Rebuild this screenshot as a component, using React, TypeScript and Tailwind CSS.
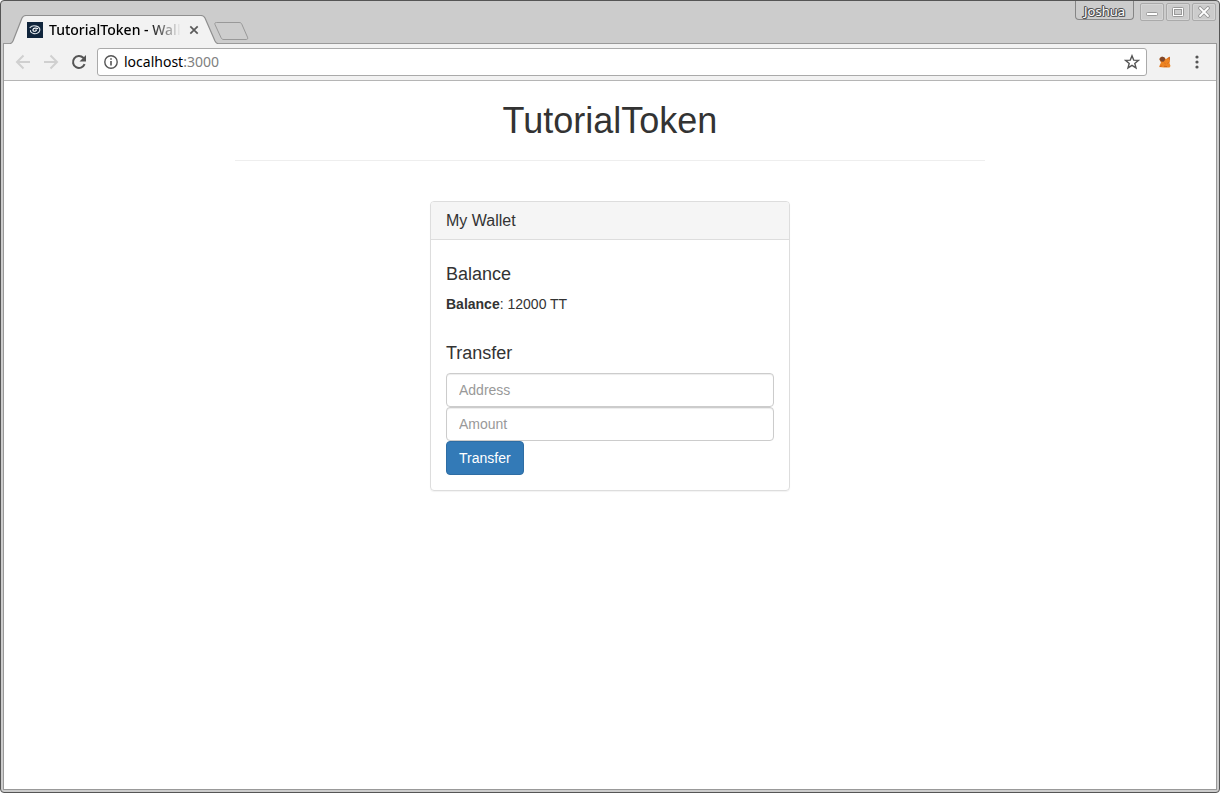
import React from "react";

function TabStrip() {
  return (
    <header className="flex h-[42px] items-start justify-between">
      <div className="flex pl-[7px] pt-[14px]">
        <div className="relative h-7 w-[208px] shrink-0">
          <svg className="absolute inset-0" width="208" height="29" viewBox="0 0 208 29" aria-hidden="true">
            <path d="M0 29 V28.500 C1.500 28.500 2 28 3 26 L12 3 C13 1 14 .5 16 .5 H191 C193 .5 194 1 195 3 L205 26 C206 28 206.500 28.500 208 28.500 V29Z" fill="#f2f2f2" />
            <path d="M0 28.500 C1.500 28.500 2 28 3 26 L12 3 C13 1 14 .5 16 .5 H191 C193 .5 194 1 195 3 L205 26 C206 28 206.500 28.500 208 28.500" fill="none" stroke="#8f8f8f" strokeWidth="1.200" />
          </svg>
          <div className="relative flex h-7 items-center pl-[17px] pt-px">
            <svg width="16" height="16" viewBox="0 0 16 16" aria-hidden="true">
              <rect width="16" height="16" fill="#10253c" />
              <path d="M3 5.600C4.300 4 7 3.500 9.300 4.100c2.800.7 4 2.400 3.400 4.400-.6 2.200-3.200 3.500-5.700 3.100C4.600 11.300 3.200 9.900 3.500 8.500" fill="none" stroke="#dfe5ea" strokeWidth="1.100" strokeLinecap="round" />
              <path d="M10.600 6.600C9 5.700 6.600 6.100 6 7.500c-.4 1.200.9 2 2.300 1.700 1-.2 1.400-1 .7-1.400" fill="none" stroke="#fff" strokeWidth="1.200" strokeLinecap="round" />
            </svg>
            <span className="ml-1.5 whitespace-nowrap bg-gradient-to-r from-black from-75% to-transparent bg-clip-text text-sm font-medium leading-5 text-transparent">
              TutorialToken - Wall
            </span>
            <button type="button" aria-label="Close tab" className="absolute right-4 flex h-4 w-4 items-center justify-center">
              <svg width="10" height="10" viewBox="0 0 10 10" aria-hidden="true">
                <path d="M1.300 1.300l7.400 7.400M8.700 1.300L1.300 8.700" stroke="#5a5a5a" strokeWidth="1.700" />
              </svg>
            </button>
          </div>
        </div>
        <button type="button" aria-label="New tab" className="-ml-1 mt-[7px] h-[18px] w-[35px] shrink-0">
          <svg width="35" height="18" viewBox="0 0 35 18" aria-hidden="true">
            <path d="M2.500 .5H25c1.500 0 2.200.4 2.800 1.700l5.700 13c.6 1.500 0 2.300-1.200 2.300H10c-1.500 0-2.300-.4-2.900-1.700L1 2.600C.5 1.300.9.500 2.500.5Z" fill="#cdcdcd" stroke="#999" />
          </svg>
        </button>
      </div>
      <div className="flex items-start pr-px">
        <button type="button" className="mr-1.5 h-[19px] w-[59px] rounded-b-[4px] border border-t-0 border-[#858585] text-[13px] leading-[21px] text-white [text-shadow:1px_0_#555,-1px_0_#555,0_1px_#555,0_-1px_#555,1px_1px_#555,-1px_-1px_#555]">
          Joshua
        </button>
        <div className="mt-0.5 flex gap-0.5">
          <button type="button" aria-label="Minimize" className="flex h-[18px] w-6 items-center justify-center rounded-[2px] border border-[#aaa] shadow-[inset_0_0_0_1px_#d5d5d5]">
            <svg width="14" height="12" viewBox="0 0 14 12" aria-hidden="true">
              <rect x="1.500" y="6.500" width="11" height="3" rx="1" fill="#fff" stroke="#999" />
            </svg>
          </button>
          <button type="button" aria-label="Maximize" className="flex h-[18px] w-6 items-center justify-center rounded-[2px] border border-[#aaa] shadow-[inset_0_0_0_1px_#d5d5d5]">
            <svg width="14" height="12" viewBox="0 0 14 12" aria-hidden="true">
              <rect x="1.500" y="1.500" width="11" height="9" rx="1" fill="#fff" stroke="#999" />
              <rect x="3.500" y="3.500" width="7" height="5" fill="#ccc" stroke="#999" />
            </svg>
          </button>
          <button type="button" aria-label="Close" className="flex h-[18px] w-6 items-center justify-center rounded-[2px] border border-[#aaa] shadow-[inset_0_0_0_1px_#d5d5d5]">
            <svg width="14" height="12" viewBox="0 0 14 12" aria-hidden="true">
              <path d="M3 2l8 8M11 2l-8 8" stroke="#949494" strokeWidth="3.600" strokeLinecap="round" />
              <path d="M3 2l8 8M11 2l-8 8" stroke="#fff" strokeWidth="1.800" strokeLinecap="round" />
            </svg>
          </button>
        </div>
      </div>
    </header>
  );
}

function Toolbar() {
  return (
    <nav className="flex h-[37px] items-center border-b border-[#b5b5b5] bg-[#f2f2f2] pl-[11px] pr-[11px]">
      <div className="flex shrink-0 gap-3">
        <button type="button" aria-label="Back" className="h-4 w-4">
          <svg width="16" height="16" viewBox="0 0 16 16" fill="none" stroke="#d0d0d0" strokeWidth="2" aria-hidden="true">
            <path d="M15 8H2.500M8.500 1.500L2 8l6.500 6.500" />
          </svg>
        </button>
        <button type="button" aria-label="Forward" className="h-4 w-4">
          <svg width="16" height="16" viewBox="0 0 16 16" fill="none" stroke="#d0d0d0" strokeWidth="2" aria-hidden="true">
            <path d="M1 8h12.500M7.500 1.500L14 8l-6.500 6.500" />
          </svg>
        </button>
        <button type="button" aria-label="Reload" className="h-4 w-4">
          <svg width="16" height="16" viewBox="0 0 16 16" aria-hidden="true">
            <path d="M13.600 10.200A6 6 0 1 1 12.300 3.800L14 5.500" fill="none" stroke="#555" strokeWidth="2" />
            <path d="M15 1v6.500H8.500Z" fill="#555" />
          </svg>
        </button>
      </div>
      <div className="ml-2.5 flex h-7 min-w-0 flex-1 items-center rounded-[3px] border border-[#aaa] bg-white px-1.5">
        <svg className="shrink-0" width="14" height="14" viewBox="0 0 14 14" aria-hidden="true">
          <circle cx="7" cy="7" r="6.200" fill="none" stroke="#555" strokeWidth="1.400" />
          <path d="M7 6v4.500M7 3.300v1.500" stroke="#555" strokeWidth="1.600" />
        </svg>
        <a href="http://localhost:3000" className="ml-1.5 flex-1 text-sm leading-5 text-black">
          localhost<span className="text-[#808080]">:3000</span>
        </a>
        <button type="button" aria-label="Bookmark this page" className="h-4 w-4 shrink-0">
          <svg width="16" height="16" viewBox="0 0 16 16" aria-hidden="true">
            <path d="M8 1.800l1.700 4.300 4.700.3-3.600 3 1.200 4.500L8 11.400l-4 2.500 1.200-4.500-3.600-3 4.700-.3Z" fill="none" stroke="#555" strokeWidth="1.400" />
          </svg>
        </button>
      </div>
      <button type="button" aria-label="MetaMask" className="ml-3 h-3 w-3 shrink-0">
        <svg width="12" height="12" viewBox="0 0 12 12" aria-hidden="true">
          <path d="M1 1.500L4 1L7 3L10.500 .5L11 5L10.500 7L11.500 10L10.500 11.500L5 11.500L.4 11L.6 9.500L2 6.500L.6 4Z" fill="#ee8421" />
          <path d="M.7 2.200L3 .6L5.700 1.400L6.200 3.800L4.500 5.800L2 5.400L.5 3.500Z" fill="#80472a" />
          <path d="M8.500 3.200L10.500 1.200V3.800M5.500 7L6.500 7.800M9.500 6.500L8.500 7.300M.7 10.600L2.700 10M5 10.200L8 10.600" stroke="#c55b19" strokeWidth=".8" fill="none" />
        </svg>
      </button>
      <button type="button" aria-label="Menu" className="ml-[18px] flex h-4 w-4 shrink-0 items-center justify-center">
        <svg width="4" height="14" viewBox="0 0 4 14" fill="#555" aria-hidden="true">
          <circle cx="2" cy="2" r="1.600" />
          <circle cx="2" cy="7" r="1.600" />
          <circle cx="2" cy="12" r="1.600" />
        </svg>
      </button>
    </nav>
  );
}

const fieldClass =
  "block h-[34px] w-full rounded-[4px] border border-[#ccc] bg-white px-3 text-sm leading-5 text-[#555] shadow-[inset_0_1px_1px_rgba(0,0,0,0.075)] placeholder:text-[#999] placeholder:opacity-100";

function WalletPage() {
  return (
    <main className="flex-1 bg-white px-4 pt-5 font-['Liberation_Sans',Arial,sans-serif] text-sm leading-5 text-[#333]">
      <div className="mx-auto max-w-[750px]">
        <h1 className="text-center text-4xl leading-[39px]">TutorialToken</h1>
        <hr className="mb-10 mt-5 border-[#eee]" />
        <section className="mx-auto max-w-[360px] rounded-[4px] border border-[#ddd] shadow-[0_1px_1px_rgba(0,0,0,0.05)]">
          <div className="rounded-t-[3px] border-b border-[#ddd] bg-[#f5f5f5] px-[15px] py-2.5">
            <h3 className="text-base leading-[17px]">My Wallet</h3>
          </div>
          <div className="px-[15px] pb-[15px] pt-6">
            <h4 className="mb-2.5 text-lg leading-5">Balance</h4>
            <p>
              <strong>Balance</strong>: 12000 TT
            </p>
            <form className="mt-[29px]" onSubmit={(event) => event.preventDefault()}>
              <h4 className="mb-2.5 text-lg leading-5">Transfer</h4>
              <input type="text" aria-label="Address" placeholder="Address" className={fieldClass} />
              <input type="text" aria-label="Amount" placeholder="Amount" className={fieldClass} />
              <button type="submit" className="block h-[34px] rounded-[4px] border border-[#2e6da4] bg-[#337ab7] px-3 text-sm leading-5 text-white">
                Transfer
              </button>
            </form>
          </div>
        </section>
      </div>
    </main>
  );
}

export default function App() {
  return (
    <div className="flex min-h-screen flex-col rounded-[4px] border border-[#555] bg-[#ccc] px-0.5 pb-0.5 font-['Noto_Sans','Open_Sans',sans-serif]">
      <TabStrip />
      <div className="flex flex-1 flex-col border border-[#999]">
        <Toolbar />
        <WalletPage />
      </div>
    </div>
  );
}
